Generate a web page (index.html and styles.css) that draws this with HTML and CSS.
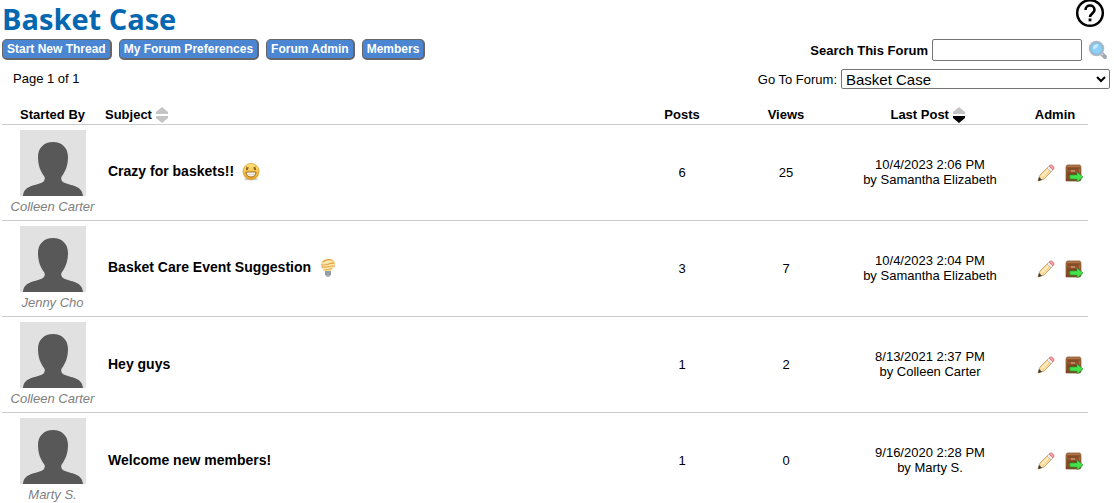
FILE: index.html
```html
<!DOCTYPE html>
<html lang="en">
<head>
  <meta charset="UTF-8">
  <title>Basket Case</title>
  <link rel="stylesheet" href="styles.css">
</head>
<body>
  <!-- shared icons -->
  <svg class="icon-defs" aria-hidden="true">
    <defs>
      <linearGradient id="gold" x1="0" y1="0" x2="0" y2="1">
        <stop offset="0" stop-color="#ffe680"/>
        <stop offset="1" stop-color="#e9a21c"/>
      </linearGradient>
      <linearGradient id="wood" x1="0" y1="0" x2="0" y2="1">
        <stop offset="0" stop-color="#b87848"/>
        <stop offset="1" stop-color="#7c4423"/>
      </linearGradient>
    </defs>
    <symbol id="person" viewBox="0 0 66 66">
      <rect width="66" height="66" fill="#e1e1e1"/>
      <path d="M33 12c-9 0-15 6-15 15 0 9 3 15 6 19 2 3 0 6-3 7-8 3-17 3-18 13h60c-1-10-10-10-18-13-3-1-5-4-3-7 3-4 6-10 6-19 0-9-6-15-15-15z" fill="#585858"/>
    </symbol>
    <symbol id="sort" viewBox="0 0 14 16">
      <path class="up" d="M7 0l6 5v2H1V5z"/>
      <path class="down" d="M1 9h12v2l-6 5-6-5z"/>
    </symbol>
    <symbol id="pencil" viewBox="0 0 18 18">
      <path d="M1 17l2-6L11 3l4 4-8 8z" fill="#f9d795" stroke="#bd955c" stroke-width=".7"/>
      <path d="M4 12l8-8 1 1-8 9z" fill="#fff0c4"/>
      <path d="M1 17l1-4 3 3z" fill="#3c3433"/>
      <path d="M10 4l2-2 4 4-2 2z" fill="#ececec" stroke="#999" stroke-width=".5"/>
      <path d="M12 2c2-2 3-1 4 0s2 2 0 4z" fill="#f49a98" stroke="#d96f70" stroke-width=".6"/>
    </symbol>
    <symbol id="move" viewBox="0 0 18 18">
      <path d="M2 1h13l1 2v13l-1 1H1V3z" fill="url(#wood)" stroke="#80502f" stroke-width=".7"/>
      <path d="M2 4h13M2 10h13" stroke="#603017" stroke-width=".8"/>
      <path d="M3 5h10v4H3zM3 11h10v4H3z" fill="#95592f" stroke="#6b3a1d" stroke-width=".6"/>
      <path d="M6 7h4" stroke="#ddb990" stroke-width="1"/>
      <path d="M5 11h7V8l6 5-6 5v-3H5z" fill="#45e34a" stroke="#24a52e" stroke-width=".7"/>
    </symbol>
  </svg>

  <div class="page">
    <div class="top">
      <div class="top-left">
        <h1>Basket Case</h1>
        <div class="buttons">
          <button type="button">Start New Thread</button>
          <button type="button">My Forum Preferences</button>
          <button type="button">Forum Admin</button>
          <button type="button">Members</button>
        </div>
        <div class="paging">Page 1 of 1</div>
      </div>
      <div class="top-right">
        <a class="help" href="#" aria-label="Help">
          <svg width="30" height="30" viewBox="0 0 30 30" fill="none" stroke="#000">
            <circle cx="15" cy="15" r="12.8" stroke-width="2.5"/>
            <path d="M10.500 12c0-6 9-6 9 0 0 3.200-4.500 3.800-4.500 7" stroke-width="2.600"/>
            <path d="M15 20.500v2.800" stroke-width="2.800"/>
          </svg>
        </a>
        <form class="search">
          <label for="search">Search This Forum</label>
          <input type="text" id="search">
          <button type="button" class="icon-button" aria-label="Search">
            <svg width="20" height="20" viewBox="0 0 20 20">
              <path d="M13 13l4 4" stroke="#9fa8b5" stroke-width="4" stroke-linecap="round"/>
              <path d="M12 12l3 3" stroke="#c8ced5" stroke-width="2"/>
              <circle cx="8.500" cy="8.500" r="6.800" fill="#8fd0f7" stroke="#b2bac2" stroke-width="2"/>
              <circle cx="8.500" cy="8.500" r="5.600" fill="none" stroke="#6eb5e6" stroke-width=".8"/>
              <path d="M5 9c0-3 2-5 5-5 0 3-2 5-5 5z" fill="#c9ebff"/>
            </svg>
          </button>
        </form>
        <div class="goto">
          <label for="forum">Go To Forum:</label>
          <select id="forum">
            <option>Basket Case</option>
          </select>
        </div>
      </div>
    </div>

    <table class="threads">
      <thead>
        <tr>
          <th class="col-user">Started By</th>
          <th class="col-subject">Subject <svg class="sort"><use href="#sort"/></svg></th>
          <th class="col-count">Posts</th>
          <th class="col-count">Views</th>
          <th class="col-last">Last Post <svg class="sort desc"><use href="#sort"/></svg></th>
          <th class="col-admin">Admin</th>
        </tr>
      </thead>
      <tbody>
        <tr>
          <td class="user"><svg class="avatar"><use href="#person"/></svg>Colleen Carter</td>
          <td class="subject">
            <a href="#">Crazy for baskets!!</a>
            <svg class="mood" viewBox="0 0 18 18">
              <ellipse cx="9" cy="16" rx="7" ry="1.500" fill="#ccc"/>
              <circle cx="9" cy="8.500" r="8" fill="url(#gold)" stroke="#d99b25" stroke-width=".8"/>
              <path d="M4 4l3 1M14 4l-3 1" stroke="#8b5b12" stroke-width=".8"/>
              <path d="M5 5v2M13 5v2" stroke="#603d10" stroke-width="1.400"/>
              <path d="M4 9h10c0 3-2 5-5 5s-5-2-5-5z" fill="#fff" stroke="#996015" stroke-width=".9"/>
              <path d="M5 11.500h8M7 9v4M9 9v5M11 9v4" stroke="#c9b48c" stroke-width=".4"/>
            </svg>
          </td>
          <td>6</td>
          <td>25</td>
          <td class="last">10/4/2023 2:06 PM<br>by Samantha Elizabeth</td>
          <td class="admin">
            <button type="button" class="icon-button" aria-label="Edit"><svg><use href="#pencil"/></svg></button>
            <button type="button" class="icon-button" aria-label="Move"><svg><use href="#move"/></svg></button>
          </td>
        </tr>
        <tr>
          <td class="user"><svg class="avatar"><use href="#person"/></svg>Jenny Cho</td>
          <td class="subject">
            <a href="#">Basket Care Event Suggestion</a>
            <svg class="mood" viewBox="0 0 18 18">
              <path d="M3 2l4-2h5l4 3v4l-4 5H7L3 9 2 5z" fill="#fbe2a0"/>
              <path d="M4 3c3-3 8-3 10-1M3 6c3 1 7-2 12-2M3 8c4 1 8-2 12-1M5 11c3 0 5-1 8-2" fill="none" stroke="#dfa94e" stroke-width="1.300" stroke-linecap="round"/>
              <path d="M4 4c3 1 7-2 10-2M4 7c3 1 8-2 11-1M5 10c3 0 6-1 8-2" fill="none" stroke="#fff1be" stroke-width=".8"/>
              <path d="M6 12h6v4l-2 2H8l-2-2z" fill="#a9b1b8"/>
              <path d="M6 13h6M6 15h6" stroke="#76818c" stroke-width=".8"/>
            </svg>
          </td>
          <td>3</td>
          <td>7</td>
          <td class="last">10/4/2023 2:04 PM<br>by Samantha Elizabeth</td>
          <td class="admin">
            <button type="button" class="icon-button" aria-label="Edit"><svg><use href="#pencil"/></svg></button>
            <button type="button" class="icon-button" aria-label="Move"><svg><use href="#move"/></svg></button>
          </td>
        </tr>
        <tr>
          <td class="user"><svg class="avatar"><use href="#person"/></svg>Colleen Carter</td>
          <td class="subject"><a href="#">Hey guys</a></td>
          <td>1</td>
          <td>2</td>
          <td class="last">8/13/2021 2:37 PM<br>by Colleen Carter</td>
          <td class="admin">
            <button type="button" class="icon-button" aria-label="Edit"><svg><use href="#pencil"/></svg></button>
            <button type="button" class="icon-button" aria-label="Move"><svg><use href="#move"/></svg></button>
          </td>
        </tr>
        <tr>
          <td class="user"><svg class="avatar"><use href="#person"/></svg>Marty S.</td>
          <td class="subject"><a href="#">Welcome new members!</a></td>
          <td>1</td>
          <td>0</td>
          <td class="last">9/16/2020 2:28 PM<br>by Marty S.</td>
          <td class="admin">
            <button type="button" class="icon-button" aria-label="Edit"><svg><use href="#pencil"/></svg></button>
            <button type="button" class="icon-button" aria-label="Move"><svg><use href="#move"/></svg></button>
          </td>
        </tr>
      </tbody>
    </table>
  </div>
</body>
</html>
```
FILE: styles.css
```css
body {
  margin: 0;
  background: #fff;
  color: #000;
  font-family: "Liberation Sans", Arial, sans-serif;
  font-size: 13px;
  overflow: hidden;
}

.icon-defs {
  display: block;
  width: 0;
  height: 0;
}

.page {
  padding: 0 4px 0 2px;
}

.top {
  display: flex;
  justify-content: space-between;
}

h1 {
  margin: 0;
  height: 39px;
  line-height: 37px;
  font-family: "Open Sans", "Noto Sans", sans-serif;
  font-size: 29px;
  font-weight: bold;
  color: #0468b1;
}

.buttons {
  display: flex;
  gap: 7px;
}

.buttons button {
  height: 21px;
  padding: 0 4px;
  border: 1px solid #666;
  border-right-width: 2px;
  border-bottom-width: 2px;
  border-radius: 5px;
  background: #4a86d2;
  color: #fff;
  font-family: inherit;
  font-size: 12px;
  font-weight: bold;
  cursor: pointer;
}

.paging {
  padding: 11px 11px 0;
  line-height: 16px;
}

.top-right {
  display: flex;
  flex-direction: column;
  align-items: flex-end;
}

.help {
  height: 39px;
  padding-right: 5px;
}

.help svg {
  display: block;
  margin-top: -2px;
}

.search {
  display: flex;
  align-items: center;
  padding-right: 2px;
}

.search label {
  font-weight: bold;
  margin-right: 4px;
}

.search input {
  box-sizing: border-box;
  width: 150px;
  height: 22px;
  margin-right: 6px;
  border: 1px solid #767676;
  border-radius: 2px;
}

.icon-button {
  padding: 0;
  border: 0;
  background: none;
  cursor: pointer;
}

.icon-button svg {
  display: block;
}

.goto {
  display: flex;
  align-items: center;
  gap: 4px;
  margin-top: 8px;
}

.goto select {
  width: 269px;
  height: 20px;
  border: 1px solid #767676;
  border-radius: 2px;
  background: #fff;
  color: #000;
  font-family: inherit;
  font-size: 15px;
}

.threads {
  width: calc(100% - 22px);
  margin-top: 16px;
  border-collapse: separate;
  border-spacing: 0;
  table-layout: fixed;
  text-align: center;
}

.threads th {
  height: 18px;
  padding: 1px 0 0;
  line-height: 18px;
  border-bottom: 1px solid #ccc;
}

.threads td {
  padding: 0;
  border-bottom: 1px solid #ccc;
}

.threads tr:last-child td {
  border-bottom: 0;
}

.col-user {
  width: 101px;
}

.col-count {
  width: 104px;
}

.col-last {
  width: 184px;
}

.col-admin {
  width: 66px;
}

.threads .col-subject {
  padding-left: 2px;
  text-align: left;
}

.sort {
  width: 14px;
  height: 16px;
  margin: 0 4px 0 -1px;
  vertical-align: -4px;
  color: #c4c4c4;
}

.sort.desc {
  color: #000;
}

.up {
  fill: #c4c4c4;
}

.down {
  fill: currentColor;
}

.threads .user {
  padding: 5px 0 2px;
  color: #808080;
  font-style: italic;
  line-height: 22px;
}

.avatar {
  display: block;
  width: 66px;
  height: 66px;
  margin: 0 auto;
}

.threads .subject {
  padding: 0 0 1px 5px;
  text-align: left;
}

.subject a {
  color: #000;
  font-size: 14px;
  font-weight: bold;
  text-decoration: none;
}

.mood {
  width: 18px;
  height: 18px;
  margin-left: 4px;
  vertical-align: middle;
}

.threads .last {
  padding-bottom: 2px;
  line-height: 15px;
}

.threads .admin {
  padding-left: 9px;
  white-space: nowrap;
}

.admin .icon-button {
  margin: 0 3px 0 4px;
  vertical-align: middle;
}

.admin svg {
  width: 18px;
  height: 18px;
}
```
